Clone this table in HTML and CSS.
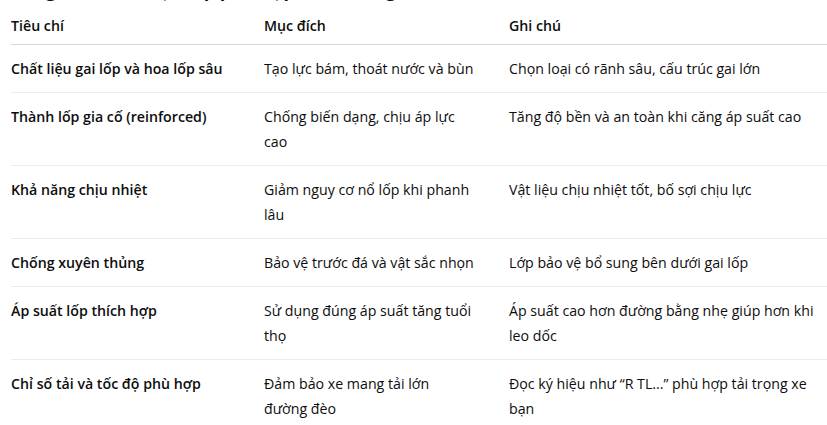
FILE: index.html
```html
<!DOCTYPE html>
<html lang="vi">
<head>
<meta charset="utf-8">
<link rel="stylesheet" href="styles.css">
</head>
<body>
<div class="page">
  <h3 class="title">Bảng tóm tắt: chọn lốp phù hợp cho đường đèo dốc</h3>
  <div class="table-wrap">
    <table class="spec">
      <colgroup>
        <col class="c1">
        <col class="c2">
        <col class="c3">
      </colgroup>
      <thead>
        <tr><th>Tiêu chí</th><th>Mục đích</th><th>Ghi chú</th></tr>
      </thead>
      <tbody>
        <tr>
          <td class="name">Chất liệu gai lốp và hoa lốp sâu</td>
          <td>Tạo lực bám, thoát nước và bùn</td>
          <td>Chọn loại có rãnh sâu, cấu trúc gai lớn</td>
        </tr>
        <tr>
          <td class="name">Thành lốp gia cố (reinforced)</td>
          <td>Chống biến dạng, chịu áp lực<br>cao</td>
          <td>Tăng độ bền và an toàn khi căng áp suất cao</td>
        </tr>
        <tr>
          <td class="name">Khả năng chịu nhiệt</td>
          <td>Giảm nguy cơ nổ lốp khi phanh<br>lâu</td>
          <td>Vật liệu chịu nhiệt tốt, bố sợi chịu lực</td>
        </tr>
        <tr>
          <td class="name">Chống xuyên thủng</td>
          <td>Bảo vệ trước đá và vật sắc nhọn</td>
          <td>Lớp bảo vệ bổ sung bên dưới gai lốp</td>
        </tr>
        <tr>
          <td class="name">Áp suất lốp thích hợp</td>
          <td>Sử dụng đúng áp suất tăng tuổi<br>thọ</td>
          <td>Áp suất cao hơn đường bằng nhẹ giúp hơn khi<br>leo dốc</td>
        </tr>
        <tr>
          <td class="name">Chỉ số tải và tốc độ phù hợp</td>
          <td>Đảm bảo xe mang tải lớn<br>đường đèo</td>
          <td>Đọc ký hiệu như “R TL...” phù hợp tải trọng xe<br>bạn</td>
        </tr>
      </tbody>
    </table>
  </div>
</div>
</body>
</html>
```

FILE: styles.css
```css
html, body {
  margin: 0;
  padding: 0;
  background: #ffffff;
}

body {
  font-family: "Open Sans", "Noto Sans", sans-serif;
  color: #0d0d0d;
  font-size: 14.2px;
  overflow: hidden;
}

.page {
  padding-left: 11px;
}

.title {
  margin: -24px 0 5px 0;
  font-size: 18px;
  line-height: 28px;
  font-weight: 700;
  white-space: nowrap;
}

.table-wrap {
  overflow: hidden;
}

.spec {
  width: 816px;
  table-layout: fixed;
  border-collapse: separate;
  border-spacing: 0;
}

.c1 { width: 253px; }
.c2 { width: 245px; }
.c3 { width: 318px; }

.spec th {
  text-align: left;
  font-weight: 600;
  line-height: 25px;
  padding: 4px 12px 6px 0;
  border-bottom: 1px solid #d6d6d6;
}

.spec td {
  vertical-align: top;
  line-height: 25px;
  padding: 11px 12px 11px 0;
  border-bottom: 1px solid #ececec;
  white-space: nowrap;
}

.spec tbody tr:last-child td {
  border-bottom: none;
}

.spec td.name {
  font-weight: 600;
}
```
